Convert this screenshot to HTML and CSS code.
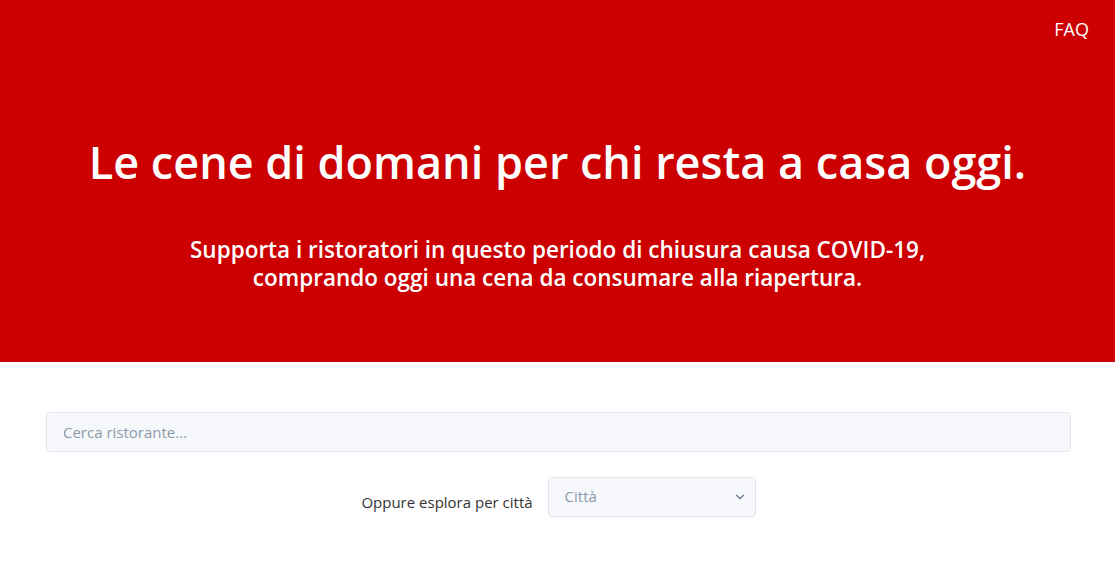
FILE: index.html
```html
<!DOCTYPE html>
<html lang="it">
<head>
<meta charset="utf-8">
<title>Le cene di domani</title>
<link rel="stylesheet" href="styles.css">
</head>
<body>
<header class="hero">
  <nav class="nav"><a class="nav-link" href="#">FAQ</a></nav>
  <h1 class="hero-title">Le cene di domani per chi resta a casa oggi.</h1>
  <p class="hero-sub">Supporta i ristoratori in questo periodo di chiusura causa COVID-19,<br>comprando oggi una cena da consumare alla riapertura.</p>
</header>
<main class="main">
  <input class="search" type="text" placeholder="Cerca ristorante...">
  <div class="city-row">
    <span class="city-label">Oppure esplora per città</span>
    <div class="select">
      <span class="select-text">Città</span>
      <svg class="chev" width="10" height="6" viewBox="0 0 10 6"><path d="M1.5 1.2 L5 4.6 L8.5 1.2" fill="none" stroke="#7b8796" stroke-width="1.5" stroke-linecap="round" stroke-linejoin="round"/></svg>
    </div>
  </div>
</main>
</body>
</html>
```

FILE: styles.css
```css
* { box-sizing: border-box; }
html, body { margin: 0; padding: 0; }
body {
  font-family: "Open Sans", "Liberation Sans", sans-serif;
  background: #fff;
  color: #333;
}
.hero {
  background: #cc0000;
  height: 362px;
  color: #fff;
  display: flex;
  flex-direction: column;
  align-items: center;
}
.nav {
  align-self: stretch;
  display: flex;
  justify-content: flex-end;
  padding: 17px 26px 0 0;
}
.nav-link {
  color: #fff;
  text-decoration: none;
  font-size: 18px;
  line-height: 24px;
}
.hero-title {
  margin: 89px 0 0;
  font-size: 45px;
  font-weight: 600;
  line-height: 64px;
  letter-spacing: 0;
}
.hero-sub {
  margin: 42px 0 0;
  font-size: 22.5px;
  font-weight: 600;
  line-height: 28px;
  text-align: center;
}
.main {
  padding: 50px 44px 0 46px;
}
.search {
  display: block;
  width: 100%;
  height: 40px;
  border: 1px solid #e1e5ee;
  border-radius: 4px;
  background: #f7f8fc;
  padding: 0 16px;
  font-family: inherit;
  font-size: 15px;
  color: #333;
  outline: none;
}
.search::placeholder { color: #8a98ab; }
.city-row {
  display: flex;
  justify-content: center;
  align-items: center;
  gap: 15px;
  margin-top: 25px;
}
.city-label {
  font-size: 15px;
  color: #333;
  padding-top: 10px;
}
.select {
  width: 208px;
  height: 40px;
  border: 1px solid #e1e5ee;
  border-radius: 4px;
  background: #f7f8fc;
  display: flex;
  align-items: center;
  justify-content: space-between;
  padding: 0 10px 0 16px;
}
.select-text {
  font-size: 15px;
  color: #8a98ab;
  margin-top: -2px;
}
.chev { display: block; }
```
